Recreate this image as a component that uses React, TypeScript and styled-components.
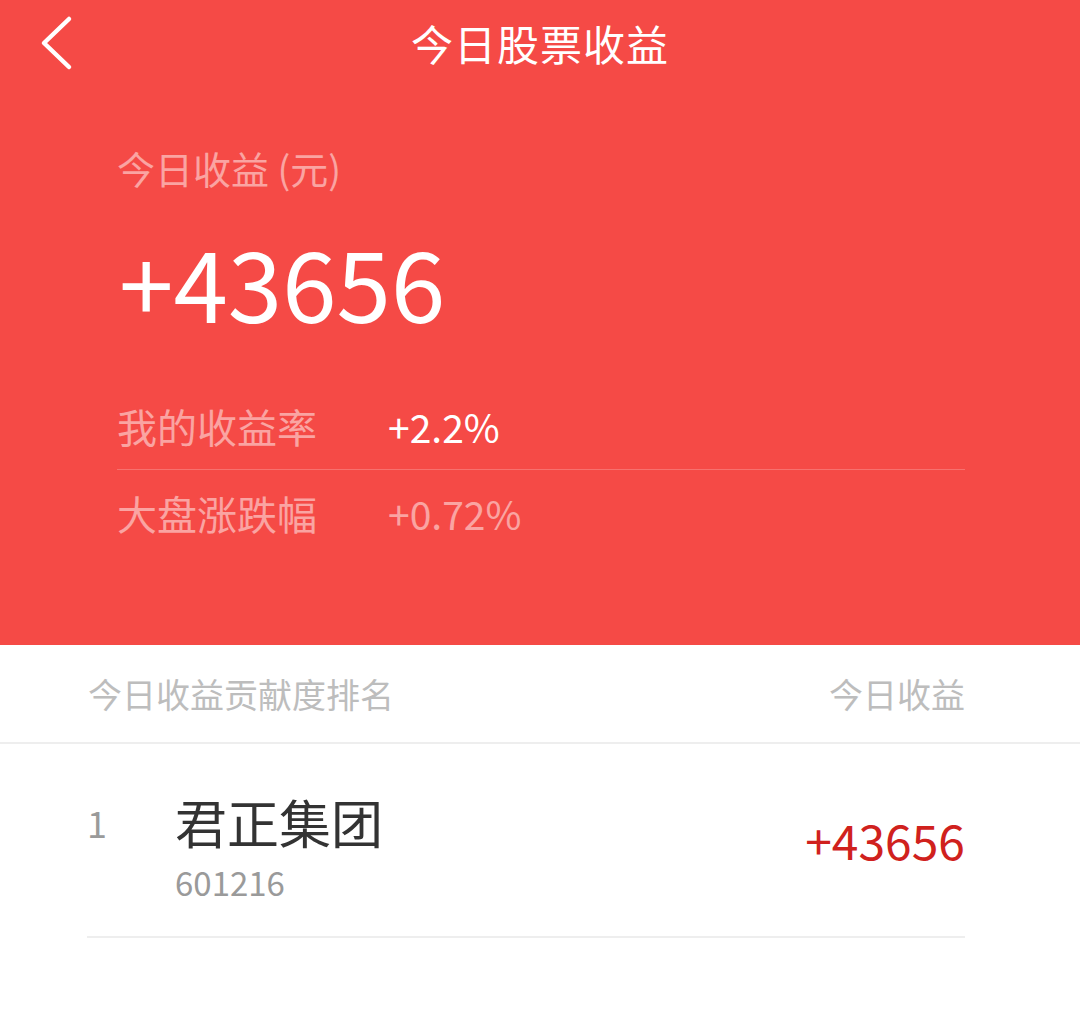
import React from 'react';
import styled, { createGlobalStyle } from 'styled-components';

const GlobalStyle = createGlobalStyle`
  html, body {
    margin: 0;
    padding: 0;
    background: #ffffff;
  }
  body {
    font-family: "Noto Sans CJK SC", "Noto Sans", sans-serif;
  }
`;

const Page = styled.div`
  width: 1080px;
  min-height: 1033px;
  background: #ffffff;
`;

const Hero = styled.div`
  background: #f54a46;
  height: 645px;
`;

const NavBar = styled.div`
  height: 86px;
  display: grid;
  grid-template-columns: 140px 1fr 140px;
  align-items: center;
`;

const BackButton = styled.button`
  border: 0;
  background: none;
  padding: 0 0 0 36px;
  height: 86px;
  display: flex;
  align-items: center;
  cursor: pointer;
`;

const Title = styled.h1`
  margin: 0;
  text-align: center;
  color: #ffffff;
  font-size: 42px;
  font-weight: 400;
  line-height: 86px;
  letter-spacing: 1px;
`;

const Summary = styled.div`
  padding: 57px 115px 0 117px;
`;

const Caption = styled.div`
  color: rgba(255, 255, 255, 0.5);
  font-size: 38px;
  line-height: 50px;
`;

const BigNumber = styled.div`
  color: #ffffff;
  font-size: 98px;
  line-height: 120px;
  margin-top: 27px;
  margin-left: 2px;
`;

const Stats = styled.div`
  margin-top: 43px;
`;

const StatRow = styled.div<{ $last?: boolean }>`
  display: flex;
  align-items: center;
  height: 86px;
  border-bottom: ${(p) => (p.$last ? 'none' : '1px solid rgba(255, 255, 255, 0.22)')};
`;

const StatLabel = styled.span`
  width: 271px;
  color: rgba(255, 255, 255, 0.5);
  font-size: 40px;
`;

const StatValue = styled.span<{ $muted?: boolean }>`
  color: ${(p) => (p.$muted ? 'rgba(255, 255, 255, 0.5)' : '#ffffff')};
  font-size: 39px;
`;

const ListHeader = styled.div`
  height: 97px;
  padding: 0 115px 0 88px;
  display: flex;
  justify-content: space-between;
  align-items: center;
  border-bottom: 2px solid #eeeeee;
  color: #bdbdbd;
  font-size: 34px;
`;

const List = styled.div`
  padding: 0 115px 0 87px;
`;

const Item = styled.div`
  display: flex;
  align-items: center;
  height: 192px;
  border-bottom: 2px solid #eeeeee;
`;

const Rank = styled.span`
  width: 88px;
  align-self: flex-start;
  margin-top: 52px;
  color: #9a9a9a;
  font-size: 36px;
  line-height: 52px;
`;

const StockInfo = styled.div`
  flex: 1;
  align-self: flex-start;
  margin-top: 47px;
  display: flex;
  flex-direction: column;
  gap: 7px;
`;

const StockName = styled.span`
  color: #333333;
  font-size: 52px;
  line-height: 62px;
`;

const StockCode = styled.span`
  color: #9a9a9a;
  font-size: 33px;
  line-height: 44px;
`;

const Profit = styled.span`
  color: #d0211d;
  font-size: 48px;
  margin-bottom: 2px;
`;

const BackIcon = () => (
  <svg width="40" height="56" viewBox="0 0 40 56" fill="none">
    <path d="M33 4 L8 28 L33 52" stroke="#ffffff" strokeWidth="4.5" strokeLinecap="round" strokeLinejoin="round" />
  </svg>
);

export default function App() {
  return (
    <Page>
      <GlobalStyle />
      <Hero>
        <NavBar>
          <BackButton aria-label="返回">
            <BackIcon />
          </BackButton>
          <Title>今日股票收益</Title>
          <span />
        </NavBar>
        <Summary>
          <Caption>今日收益 (元)</Caption>
          <BigNumber>+43656</BigNumber>
          <Stats>
            <StatRow>
              <StatLabel>我的收益率</StatLabel>
              <StatValue>+2.2%</StatValue>
            </StatRow>
            <StatRow $last>
              <StatLabel>大盘涨跌幅</StatLabel>
              <StatValue $muted>+0.72%</StatValue>
            </StatRow>
          </Stats>
        </Summary>
      </Hero>
      <ListHeader>
        <span>今日收益贡献度排名</span>
        <span>今日收益</span>
      </ListHeader>
      <List>
        <Item>
          <Rank>1</Rank>
          <StockInfo>
            <StockName>君正集团</StockName>
            <StockCode>601216</StockCode>
          </StockInfo>
          <Profit>+43656</Profit>
        </Item>
      </List>
    </Page>
  );
}
